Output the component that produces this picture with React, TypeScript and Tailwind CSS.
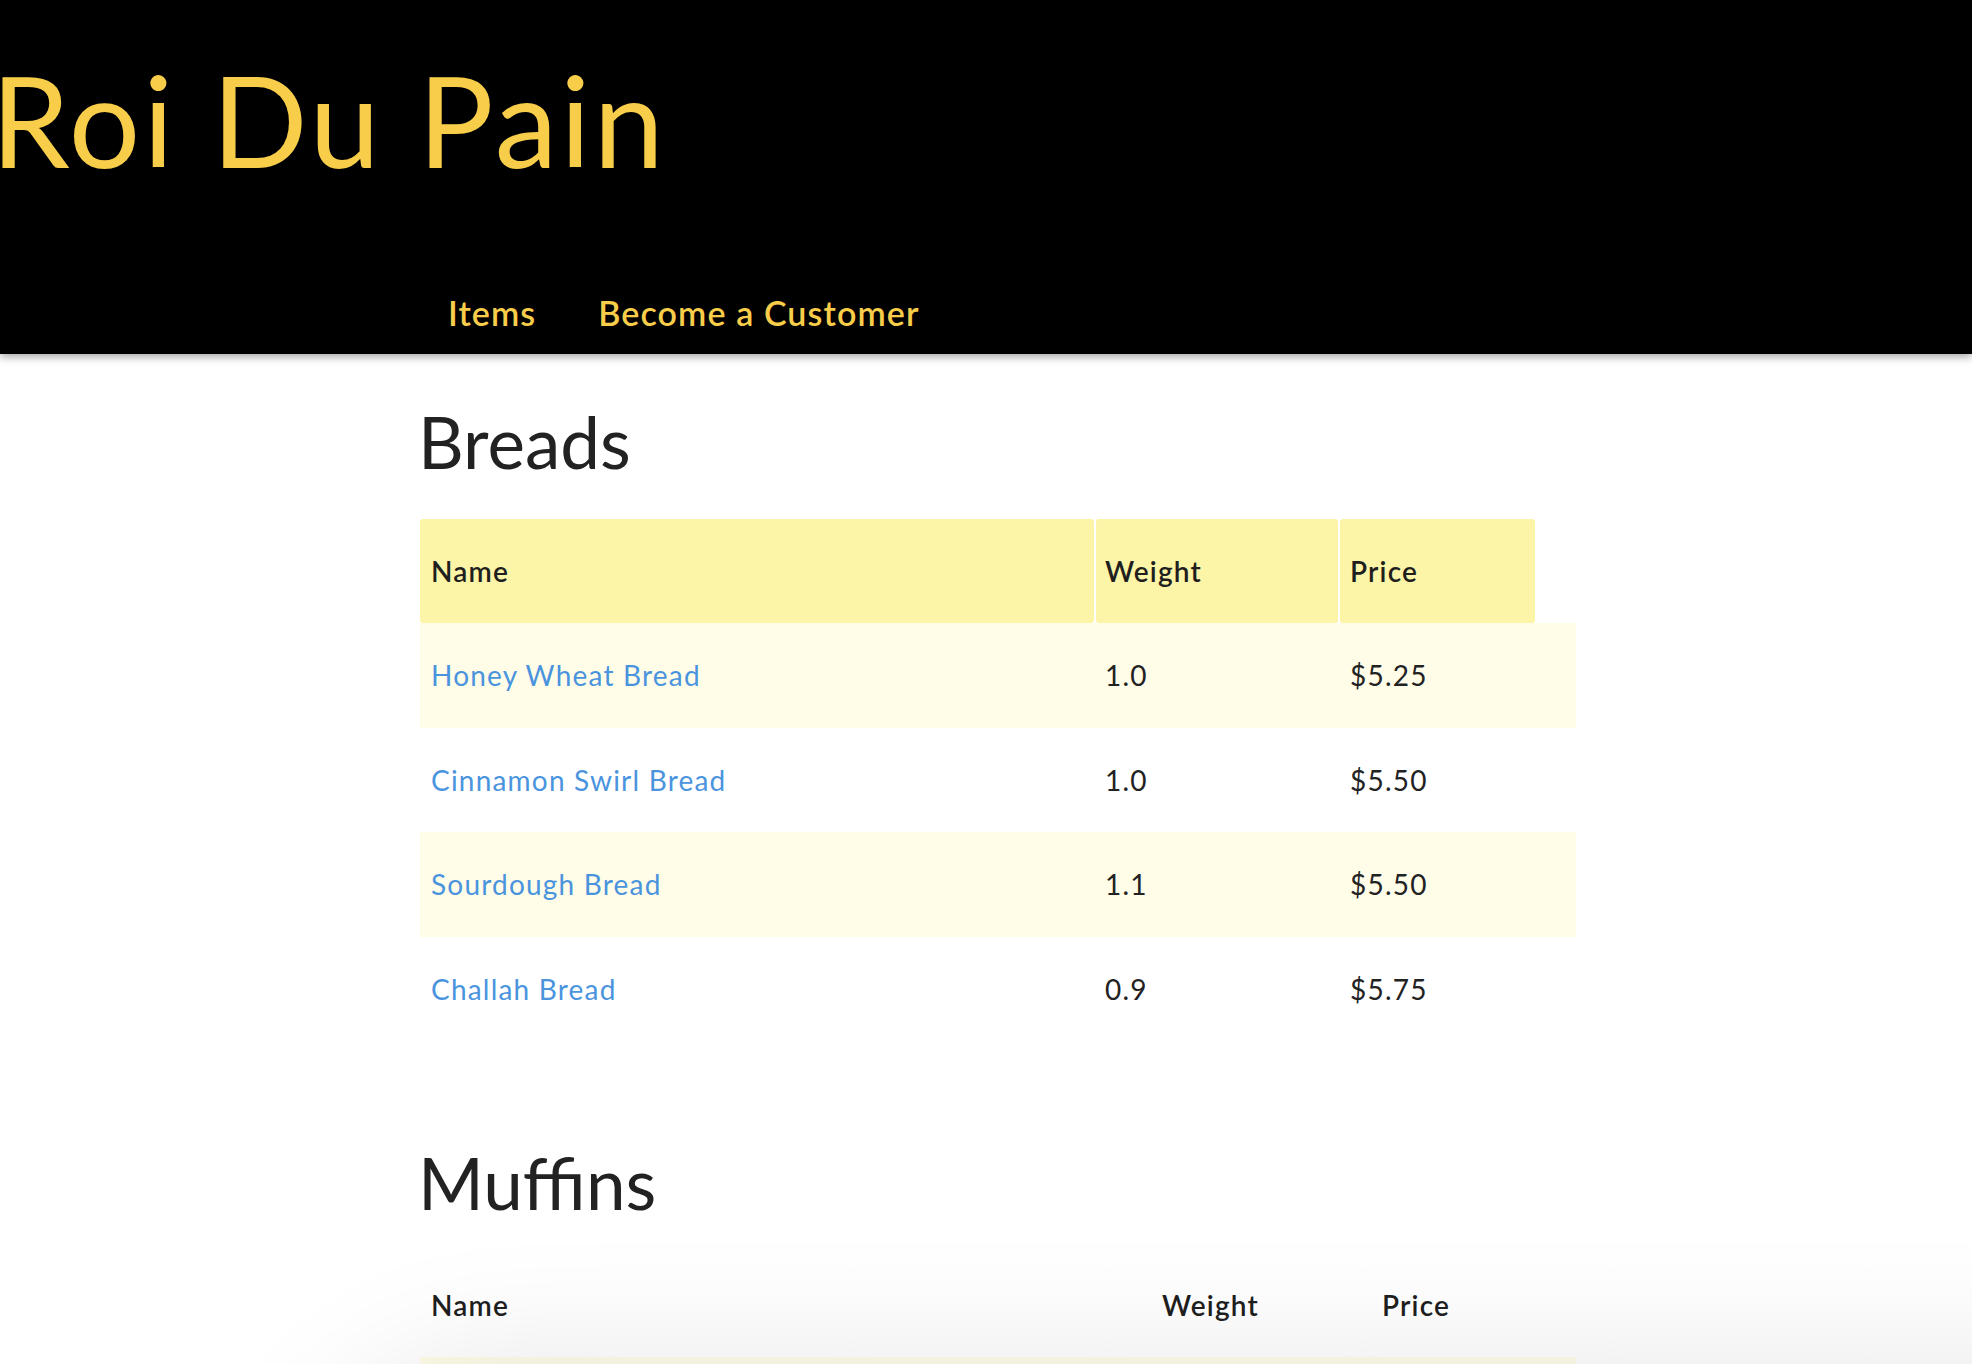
import React from "react";

type Item = { name: string; weight: string; price: string };

const breads: Item[] = [
  { name: "Honey Wheat Bread", weight: "1.0", price: "$5.25" },
  { name: "Cinnamon Swirl Bread", weight: "1.0", price: "$5.50" },
  { name: "Sourdough Bread", weight: "1.1", price: "$5.50" },
  { name: "Challah Bread", weight: "0.9", price: "$5.75" },
];

const muffins: Item[] = [
  { name: "Blueberry Muffin", weight: "0.3", price: "$2.25" },
  { name: "Banana Nut Muffin", weight: "0.3", price: "$2.25" },
  { name: "Chocolate Chip Muffin", weight: "0.3", price: "$2.50" },
];

function ItemTable({
  title,
  items,
  cols,
  highlightHead,
  className,
  gap,
}: {
  title: string;
  items: Item[];
  cols: string;
  highlightHead: boolean;
  className?: string;
  gap: string;
}) {
  const headCell = highlightHead ? "bg-[#fcf4a6] rounded-[3px]" : "";
  return (
    <section className={className}>
      <h2 className="text-[71px] leading-none font-normal text-[#222] ml-[-2px]">{title}</h2>
      <div className={`${gap} w-[1156px] tracking-[1.2px]`}>
        <div className={`grid ${cols} h-[104px] text-[28px] font-semibold text-[#1f1f1f]`}>
          <div className={`flex items-center pl-[11px] mr-[2px] ${headCell}`}>Name</div>
          <div className={`flex items-center pl-[9px] mr-[2px] ${headCell}`}>Weight</div>
          <div className={`flex items-center pl-[10px] ${headCell}`}>Price</div>
          <div />
        </div>
        {items.map((item, i) => (
          <div
            key={item.name}
            className={`grid ${cols} h-[104.5px] items-center text-[28px] ${
              i % 2 === 0 ? "bg-[#fffce8]" : "bg-white"
            }`}
          >
            <a href="#" className="pl-[11px] text-[#4a94de]">
              {item.name}
            </a>
            <div className="pl-[9px] text-[#222]">{item.weight}</div>
            <div className="pl-[10px] text-[#222]">{item.price}</div>
            <div />
          </div>
        ))}
      </div>
    </section>
  );
}

export default function App() {
  return (
    <div className="min-h-screen bg-white font-['Lato','Noto_Sans',sans-serif] overflow-hidden">
      <header className="relative z-10 h-[354px] bg-black flex flex-col shadow-[0_3px_8px_rgba(0,0,0,0.35)]">
        <h1 className="pt-[57px] ml-[-9px] text-[126px] leading-none tracking-[3px] font-normal text-[#f7cd4a]">
          Roi Du Pain
        </h1>
        <nav className="mt-auto pb-[24px] pl-[448px] flex gap-[62px] text-[34px] leading-none tracking-[1.1px] font-semibold text-[#f7cd4a]">
          <a href="#">Items</a>
          <a href="#">Become a Customer</a>
        </nav>
      </header>

      <main className="pl-[420px]">
        <ItemTable
          title="Breads"
          items={breads}
          cols="grid-cols-[676px_244px_195px_41px]"
          highlightHead
          gap="mt-[42px]"
          className="pt-[52px]"
        />
        <ItemTable
          title="Muffins"
          items={muffins}
          cols="grid-cols-[733px_219px_163px_41px]"
          highlightHead={false}
          gap="mt-[35px]"
          className="pt-[106px] pb-[80px]"
        />
      </main>

      <div className="pointer-events-none fixed left-[300px] right-[-300px] top-[1364px] h-[400px] rounded-[200px] shadow-[0_0_140px_rgba(0,0,0,0.10)]" />
    </div>
  );
}
